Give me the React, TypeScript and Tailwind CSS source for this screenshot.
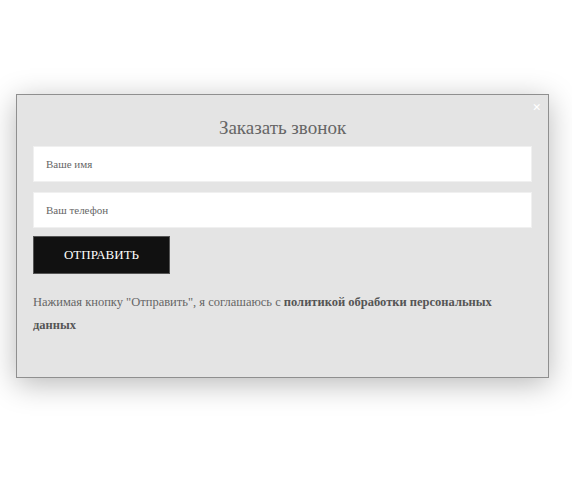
export default function App() {
  const serif = { fontFamily: '"Liberation Serif", "Times New Roman", serif' };
  return (
    <div className="w-[572px] h-[480px] bg-white pt-[94px] pl-[16px]" style={serif}>
      <div className="relative w-[533px] h-[284px] bg-[#e4e4e4] border border-[#8f8f8f] shadow-[0_6px_28px_rgba(0,0,0,0.28)] px-[16px] pt-[21px]">
        <button className="absolute right-[7px] top-[5px] text-white text-[15px] font-bold leading-none">×</button>
        <div className="text-center text-[19px] leading-[24px] text-[#666]">Заказать звонок</div>
        <div className="mt-[6px] h-[36px] bg-white border border-[#f0f0f0] flex items-center pl-[12px] text-[11px] text-[#666]">Ваше имя</div>
        <div className="mt-[10px] h-[36px] bg-white border border-[#f0f0f0] flex items-center pl-[12px] text-[11px] text-[#666]">Ваш телефон</div>
        <div className="mt-[8px] w-[137px] h-[38px] bg-[#111] border border-[#555] flex items-center justify-center text-white text-[13px]">ОТПРАВИТЬ</div>
        <p className="mt-[17px] text-[12.5px] leading-[23px] text-[#666]">
          Нажимая кнопку "Отправить", я соглашаюсь с{" "}
          <b className="font-bold text-[#555]">политикой обработки персональных данных</b>
        </p>
      </div>
    </div>
  );
}
